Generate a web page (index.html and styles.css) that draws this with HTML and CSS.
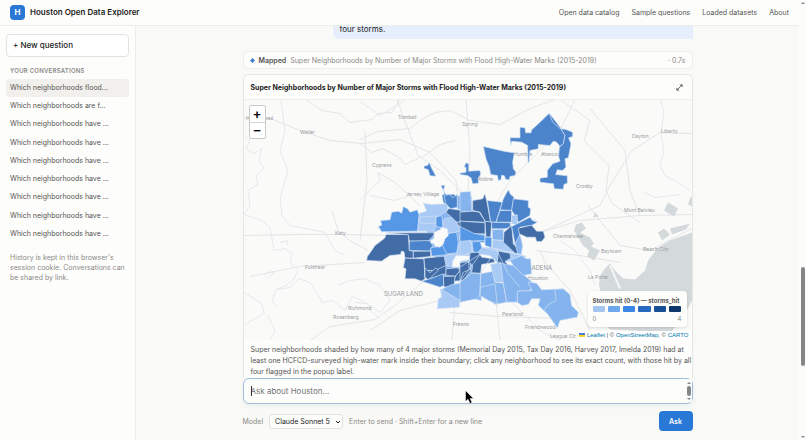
FILE: index.html
```html
<!DOCTYPE html>
<html lang="en">
<head>
<meta charset="utf-8">
<title>Houston Open Data Explorer</title>
<link rel="stylesheet" href="styles.css">
</head>
<body>
<div class="app">
  <header class="topbar">
    <span class="logo">H</span>
    <span class="brand">Houston Open Data Explorer</span>
    <nav class="nav">
      <a href="#">Open data catalog</a>
      <a href="#">Sample questions</a>
      <a href="#">Loaded datasets</a>
      <a href="#">About</a>
    </nav>
  </header>
  <div class="body">
    <aside class="sidebar">
      <button class="new">+ New question</button>
      <h2 class="side-title">Your conversations</h2>
      <nav class="history">
        <a class="active" href="#">Which neighborhoods flood...</a>
        <a href="#">Which neighborhoods are f...</a>
        <a href="#">Which neighborhoods have ...</a>
        <a href="#">Which neighborhoods have ...</a>
        <a href="#">Which neighborhoods have ...</a>
        <a href="#">Which neighborhoods have ...</a>
        <a href="#">Which neighborhoods have ...</a>
        <a href="#">Which neighborhoods have ...</a>
        <a href="#">Which neighborhoods have ...</a>
      </nav>
      <p class="note">History is kept in this browser's session cookie. Conversations can be shared by link.</p>
    </aside>
    <main class="main">
      <div class="thread">
        <div class="bubble">four storms.</div>
        <div class="step">
          <svg class="diamond" viewBox="0 0 6 6"><path d="M3 0 6 3 3 6 0 3z"/></svg>
          <b>Mapped</b>
          <span>Super Neighborhoods by Number of Major Storms with Flood High-Water Marks (2015-2019)</span>
          <span class="time">· 0.7s</span>
        </div>
        <section class="card">
          <div class="card-head">
            <h1>Super Neighborhoods by Number of Major Storms with Flood High-Water Marks (2015-2019)</h1>
            <button class="expand" aria-label="Expand"><svg viewBox="0 0 8 8"><path d="M1 7 7 1M4.500 1H7V3.500M1 4.500V7H3.500"/></svg></button>
          </div>
          <div class="map">
            <svg class="canvas" viewBox="244 99 448 241" preserveAspectRatio="xMidYMid slice">
              <g class="roads">
                <path d="M244 118 270 118 300 130 330 140 362 143 400 139 430 152 456 180 460 215 463 260M306 99 322 110 340 113 350 122 372 119 378 113 392 112 400 99M360 139 378 131 410 128 420 120 435 112 450 110 470 120 500 124 530 108 555 99M397 99 403 115 418 155 440 170 470 200M466 99 470 150 468 190M575 99 560 130 540 150 510 180 480 230M244 235 300 234 340 234 460 236 540 232 580 220 640 215 692 214M310 340 330 326 375 319 395 305 430 275 462 258M365 262 300 266 250 276M470 260 500 290 540 330 560 340M462 260 440 300 400 310 370 330M463 262 455 300 452 340M540 232 600 205 610 185 632 150 660 132 692 133M590 108 625 150 630 190 640 215M588 205 600 220 620 245 650 250 692 228M535 250 580 255 620 262M560 99 590 120 584 140 596 152 609 165 606 190 612 203 640 222M360 143 372 152 382 148 398 156 405 164 425 155 440 144 455 140M360 200 380 180 378 172 395 182 420 205M332 210 338 230 350 240 368 250M365 130 367 180 360 240M540 250 545 262 570 290 590 330M450 312 500 316 560 318M490 260 495 290 500 340"/>
              </g>
              <g class="streams">
                <path d="M244 135 250 140 246 148 254 153 262 148 259 160 264 168 256 176 258 184 248 190 250 205 244 214 262 220 270 227 272 238 274 250 285 248 292 253 290 262 298 270 293 280 284 286 276 289 272 300 276 306M281 99 285 130 280 150 288 170 280 198 282 215 290 225 325 232 335 250 345 255M244 292 262 303 264 313 250 321 244 325M268 315 275 330 270 340M276 289 290 287 299 278 310 282 318 294 322 302 333 300 345 310 352 296 362 300 380 312 390 300 380 285 365 278 350 280 338 285M265 275 270 270 275 272 268 277M280 242 287 240 288 245M355 302 368 303 370 310 380 318M660 99 664 110 661 135 664 150 660 165 665 175 678 182 690 190M644 192 655 197 680 194M360 101 380 115 400 103 405 99M410 195 395 200 370 195M560 240 575 250 590 270 595 285"/>
              </g>
              <g class="water">
                <path d="M692 232 670 240 657 248 648 260 645 270 635 279 623 278 615 270 610 263 605 268 600 275 599 285 603 300 600 320 610 329 650 331 672 331 688 308 692 300z"/>
                <path d="M576 224 582 222 586 228 580 232 590 237 594 243 591 246 600 250 594 260 587 256 589 250 582 244 578 236 574 230z M668 202 678 208 674 216 664 210z M658 232 664 228 670 234 662 240z M670 228 690 223 686 229 672 234z M690 198 692 196 692 206 688 204z M595 212 599 216 593 217z"/>
              </g>
              <path class="channel" d="M610 265 620 288"/>
              <g class="labels">
                <text x="246" y="119">Hempstead</text>
                <text x="398" y="118">Tomball</text><text x="462" y="125">Spring</text><text x="300" y="133">Waller</text>
                <text x="372" y="166">Cypress</text><text x="406" y="195">Jersey Village</text><text x="335" y="234">Katy</text>
                <text x="305" y="268">Fulshear</text><text x="348" y="309">Richmond</text><text x="333" y="318">Rosenberg</text>
                <text x="502" y="315">Pearland</text><text x="453" y="325">Fresno</text><text x="525" y="328">Friendswood</text>
                <text x="550" y="337">League City</text><text x="528" y="279">Houston</text><text x="553" y="237">Channelview</text>
                <text x="601" y="252">Baytown</text><text x="643" y="250">Beach City</text><text x="588" y="278">La Porte</text>
                <text x="624" y="211">Mont Belvieu</text><text x="632" y="137">Dayton</text><text x="661" y="132">Liberty</text>
                <text x="576" y="187">Crosby</text><text x="514" y="155">Humble</text><text x="541" y="155">Atascocita</text><text x="478" y="180">Aldine</text>
                <text class="city" x="384" y="295">SUGAR LAND</text><text class="city" x="520" y="269">PASADENA</text>
              </g>
              <!-- north-east neighborhoods -->
              <g class="hoods" transform="translate(460 100) scale(.3333)">
                <path class="s3" d="M268 38 276 55 300 80 315 105 310 130 300 138 290 125 280 122 270 135 235 132 235 145 210 150 207 185 204 185 203 135 185 125 155 122 152 135 150 112 180 112 180 80 195 82 197 97 213 97 215 88 235 70z"/>
                <path class="s3" d="M268 38 278 65 300 84 318 87 338 95 338 108 326 112 333 130 325 172 315 175 318 200 308 210 292 208 287 222 322 226 322 248 312 252 310 266 283 265 280 250 240 245 240 233 262 230 262 210 278 190 300 182 296 168 298 140 310 130 315 105 300 80z"/>
                <path class="s3" d="M70 138 135 153 163 157 158 185 160 205 168 215 165 225 150 228 148 238 137 237 133 226 125 224 123 238 115 240 112 225 92 222 88 200 78 175z"/>
                <path class="s3" d="M18 187 26 190 26 212 60 210 62 222 55 232 55 248 38 250 33 232 22 225 0 222 0 218 18 215 18 200 12 200z"/>
              </g>
              <g class="hoods" transform="translate(360 100) scale(.3333)">
                <path class="s3" d="M192 197 202 195 208 187 215 203 228 227 210 226 205 208 192 203z"/>
                <path class="s3" d="M243 255 255 254 250 270 259 283 282 281 290 288 288 316 266 320 250 305 246 284 254 280z"/>
              </g>
              <!-- western neighborhoods -->
              <g class="hoods" transform="translate(360 190) scale(.3333)">
                <path class="s1" d="M190 78 250 60 360 70 360 280 240 260 200 120z"/>
                <path class="s2" d="M55 108 65 104 62 90 90 88 95 65 115 62 125 68 130 48 143 55 150 65 172 58 178 75 173 122 65 124z"/>
                <path class="s0" d="M178 68 200 62 190 38 215 42 262 40 264 62 242 72 235 80 228 105 222 122 173 122z"/>
                <path class="s0" d="M180 80 228 76 228 98 180 98z"/>
                <path class="s2" d="M228 80 245 75 250 112 228 108z"/>
                <path class="s4" d="M78 132 145 132 148 180 160 182 160 203 135 203 132 184 124 182 122 192 90 195 75 205 65 212 20 210 22 198 35 180 45 165 65 150 75 142z"/>
                <path class="s4" d="M78 127 222 127 225 130 205 152 148 152 145 133z"/>
                <path class="s3" d="M148 152 208 150 218 165 210 182 148 180z"/>
                <path class="s4" d="M160 182 212 182 212 198 160 203z"/>
                <path class="s2" d="M212 172 250 165 275 180 268 192 215 197z"/>
                <path class="s2" d="M250 130 290 125 295 160 290 187 260 190 248 165z"/>
                <path class="s0" d="M248 100 255 83 280 80 295 105 297 122 262 130 262 115 250 112z"/>
                <path class="s4" d="M258 66 266 54 335 64 340 95 290 95 275 80z"/>
                <path class="s4" d="M290 95 375 95 375 130 320 122 295 105z"/>
                <path class="s2" d="M297 122 375 132 375 155 300 160z"/>
                <path class="s0" d="M295 160 335 152 340 190 290 195z"/>
                <path class="s3" d="M252 15 270 12 278 22 292 12 293 50 272 55 258 40z"/>
                <path class="s1" d="M292 17 325 8 335 20 337 65 292 55z"/>
                <path class="s4" d="M135 203 192 205 195 265 185 272 165 265 135 265 138 235 130 232z"/>
                <path class="s4" d="M192 203 252 197 258 225 235 240 195 240z"/>
                <path class="s4" d="M195 240 225 240 258 225 258 250 210 265 195 262z"/>
                <path class="s4" d="M195 232 210 247 228 232 235 240 205 268 195 260z"/>
                <path class="s3" d="M185 272 210 265 250 250 252 285 240 290 225 285z"/>
                <path class="s4" d="M258 235 292 232 300 240 288 257 258 255z"/>
                <path class="s4" d="M250 258 286 257 282 287 252 290z"/>
                <path class="s4" d="M302 215 330 212 332 240 310 270 282 272 288 255 302 238z"/>
                <path class="s0" d="M255 195 290 190 280 225 262 228z"/>
                <path class="hole" d="M222 125 240 118 245 110 262 115 265 135 255 145 250 160 240 170 225 168 222 160 214 158 212 150 222 143zM288 195 332 196 328 208 302 212 300 230 276 230 278 212z"/>
                <path class="s1" d="M242 298 275 282 320 275 360 248 364 330 330 322 300 330 245 320z"/>
                <path class="s0" d="M242 295 300 330 298 350 232 355 235 325 245 320z"/>
              </g>
              <!-- central and eastern neighborhoods -->
              <g class="hoods" transform="translate(460 190) scale(.3333)">
                <path class="s1" d="M0 5 32 3 35 65 0 62z"/>
                <path class="s4" d="M38 30 68 25 74 10 80 30 92 95 75 92 60 65 38 60z"/>
                <path class="s3" d="M82 30 127 35 108 95 92 95z"/>
                <path class="s3" d="M130 25 137 12 145 -2 152 12 162 20 155 60 120 58z"/>
                <path class="s3" d="M160 25 205 30 205 50 212 55 210 75 175 95 165 75 155 60z"/>
                <path class="s3" d="M120 60 155 60 155 95 108 95z"/>
                <path class="s0" d="M155 75 172 73 172 102 155 100z"/>
                <path class="s4" d="M0 65 38 62 58 65 75 92 75 95 0 92z"/>
                <path class="s4" d="M0 92 75 97 75 130 40 130 0 110z"/>
                <path class="s4" d="M75 92 95 95 92 140 78 140z"/>
                <path class="s3" d="M95 95 152 97 150 110 135 115 95 115z"/>
                <path class="s2" d="M0 108 40 128 75 135 75 150 0 152z"/>
                <path class="s2" d="M75 140 95 140 95 172 75 165z"/>
                <path class="s1" d="M97 117 130 117 130 150 97 148z"/>
                <path class="s0" d="M97 148 130 150 165 170 168 188 130 180 97 172z"/>
                <path class="s4" d="M132 125 155 105 160 160 175 175 173 190 165 188 130 155z"/>
                <path class="s3" d="M155 108 210 80 218 90 232 95 215 105 180 110 178 145 165 160z"/>
                <path class="s1" d="M165 160 180 132 188 165 184 192 174 190z"/>
                <path class="s4" d="M175 113 215 104 230 122 250 122 255 140 245 153 230 153 226 140 200 140 178 130z"/>
                <path class="s0" d="M0 155 32 150 36 187 0 195zM60 170 95 172 165 190 200 197 150 212 110 215 90 195 50 190z"/>
                <path class="s2" d="M36 155 60 152 66 172 52 187 40 183z"/>
                <path class="s4" d="M30 187 55 185 65 200 100 205 105 215 65 222 62 248 35 247 38 225 28 215z"/>
                <path class="s4" d="M0 217 25 213 28 238 10 245 0 272z"/>
                <path class="s4" d="M115 182 150 188 152 203 135 213 147 225 112 222z"/>
                <path class="s1" d="M0 275 35 248 62 250 60 315 50 325 0 335z"/>
                <path class="s1" d="M62 250 100 242 105 275 130 278 140 335 105 342 90 330 60 315z"/>
                <path class="s1" d="M62 290 105 280 112 340 90 332 60 315z"/>
                <path class="s0" d="M92 222 122 215 132 275 105 275z"/>
                <path class="s1" d="M122 218 160 225 228 285 205 302 175 302 172 335 140 335 130 280z"/>
                <path class="s1" d="M150 210 185 195 200 205 212 205 215 250 190 255 160 225z"/>
                <path class="s1" d="M172 302 215 300 205 275 230 278 245 298 310 295 330 312 335 345 355 365 352 380 300 390 292 413 280 395 262 370 235 345 240 325 215 325 205 342 185 345 172 335z"/>
                <path class="line" d="M285 298 288 330 265 342 252 360M0 272 62 190 M62 190 0 230M65 170 115 182M108 175 145 250 180 290M62 250 90 205M215 90 225 85 234 96"/>
              </g>
            </svg>
            <div class="zoom"><button aria-label="Zoom in">+</button><button aria-label="Zoom out">−</button></div>
            <div class="legend">
              <b>Storms hit (0-4) — storms_hit</b>
              <div class="swatches"><i class="c1"></i><i class="c2"></i><i class="c3"></i><i class="c4"></i><i class="c5"></i><i class="c6"></i></div>
              <div class="range"><span>0</span><span>4</span></div>
            </div>
            <div class="credit"><svg class="flag" viewBox="0 0 12 8"><path fill="#4c7be1" d="M0 0h12v4H0z"/><path fill="#ffd500" d="M0 4h12v3H0z"/><path fill="#e0bc00" d="M0 7h12v1H0z"/></svg> <a href="#">Leaflet</a> | © <a href="#">OpenStreetMap</a>, © <a href="#">CARTO</a></div>
          </div>
          <p class="caption">Super neighborhoods shaded by how many of 4 major storms (Memorial Day 2015, Tax Day 2016, Harvey 2017, Imelda 2019) had at least one HCFCD-surveyed high-water mark inside their boundary; click any neighborhood to see its exact count, with those hit by all four flagged in the popup label.</p>
        </section>
      </div>
      <form class="composer">
        <div class="field">
          <textarea aria-label="Ask about Houston" placeholder="Ask about Houston..."></textarea>
          <span class="caret"></span>
          <svg class="mini-bar" viewBox="0 0 6 23"><path class="track" d="M0 0h6v23H0z"/><path d="M3 3 5 5H1zM3 21 1 19h4z"/><rect x="1" y="7" width="4" height="10" rx="2"/></svg>
          <svg class="pointer" viewBox="0 0 9 14"><path d="M.5.500V11.500L3 9.200 5 13.500 7 12.600 5.200 8.500H8.500z"/></svg>
        </div>
        <div class="controls">
          <label for="model">Model</label>
          <div class="pick">
            <select id="model"><option>Claude Sonnet 5</option></select>
            <svg viewBox="0 0 6 4"><path d="M1 1 3 3 5 1"/></svg>
          </div>
          <span>Enter to send · Shift+Enter for a new line</span>
          <button class="ask" type="button">Ask</button>
        </div>
      </form>
    </main>
  </div>
</div>
<div class="scrollbar"><i class="up"></i><i class="thumb"></i><i class="down"></i></div>
</body>
</html>
```
FILE: styles.css
```css
* { box-sizing: border-box; }
body {
  margin: 0;
  height: 100vh;
  display: flex;
  overflow: hidden;
  background: #f9f9f7;
  color: #1c1c1b;
  font: 8px/11px Inter, "Liberation Sans", sans-serif;
}
button, select, textarea { font: inherit; color: inherit; margin: 0; }
a { color: inherit; text-decoration: none; }
h1, h2, p { margin: 0; }

.app { flex: 1; min-width: 0; display: flex; flex-direction: column; }
.topbar {
  height: 26px;
  flex: none;
  display: flex;
  align-items: center;
  gap: 5px;
  padding: 0 10px;
  background: #fdfdfc;
  border-bottom: 1px solid #ececea;
}
.logo {
  width: 15px;
  height: 15px;
  border-radius: 4px;
  background: #2a78d6;
  color: #fff;
  font-weight: 700;
  line-height: 15px;
  text-align: center;
}
.brand { font-weight: 600; }
.nav { margin-left: auto; display: flex; gap: 12px; color: #555452; font-size: 7px; }

.body { flex: 1; min-height: 0; display: flex; }
.sidebar {
  width: 136px;
  flex: none;
  padding: 8px 6px;
  background: #fdfdfc;
  border-right: 1px solid #ececea;
}
.new {
  width: 100%;
  height: 23px;
  padding: 0 6px;
  border: 1px solid #e2e2df;
  border-radius: 4px;
  background: #fff;
  font-weight: 500;
  text-align: left;
}
.side-title {
  margin: 8px 4px 3px;
  color: #8b8a86;
  font-size: 6px;
  line-height: 11px;
  font-weight: 600;
  letter-spacing: 0.04em;
  text-transform: uppercase;
}
.history { display: grid; grid-auto-rows: 1fr; height: 164px; color: #555452; font-size: 7px; }
.history a { padding: 0 4px; line-height: 18px; border-radius: 3px; white-space: nowrap; overflow: hidden; }
.history .active { background: #f1f0ed; }
.note { margin: 10px 4px; color: #8b8a86; font-size: 7px; line-height: 10px; }

.main { flex: 1; min-width: 0; display: flex; flex-direction: column; }
.thread {
  flex: 1;
  min-height: 0;
  overflow: hidden;
  width: 100%;
  max-width: 450px;
  margin: 0 auto;
  display: flex;
  flex-direction: column;
}
.bubble {
  align-self: flex-end;
  flex: none;
  width: 80%;
  height: 13px;
  padding: 0 7px;
  line-height: 6px;
  background: #e6eefc;
  border-radius: 0 0 2px 6px;
}
.step {
  display: flex;
  align-items: center;
  gap: 4px;
  height: 18px;
  flex: none;
  margin: 12px 0 5px;
  padding: 0 6px;
  border: 1px solid #eeeeeb;
  border-radius: 4px;
  background: #fdfdfc;
  color: #8b8a86;
  font-size: 7px;
}
.step b { color: #555452; font-weight: 600; }
.diamond { width: 5px; height: 5px; fill: #3f7fd0; }
.time { margin-left: auto; }
.card {
  flex: none;
  border: 1px solid #e6e6e3;
  border-radius: 5px;
  background: #fdfdfc;
}
.card-head { display: flex; align-items: center; justify-content: space-between; height: 24px; padding: 0 7px; }
.card-head h1 { font-size: 7px; font-weight: 700; }
.expand { border: 0; padding: 0 2px; background: none; display: flex; }
.expand svg { width: 7px; height: 7px; fill: none; stroke: #555452; }

.map { position: relative; height: 241px; overflow: hidden; background: #fafaf9; border-top: 1px solid #eeeeeb; }
.canvas { display: block; width: 100%; height: 100%; }
.roads { fill: none; stroke: #e4e5e6; }
.streams { fill: none; stroke: #e6e9eb; }
.water { fill: #d4d9dc; }
.channel { stroke: #f5f6f6; stroke-width: 2; }
.labels { fill: #989ba0; font-size: 5px; }
.labels .city { font-size: 6px; }
.hoods { stroke: #d3e2f5; stroke-width: 2; stroke-linejoin: round; }
.s0 { fill: #a9caf4; }
.s1 { fill: #84b3ee; }
.s2 { fill: #5698e6; }
.s3 { fill: #4b84cb; }
.s4 { fill: #416ca6; }
.hole { fill: #fafaf9; }
.line { fill: none; }

.zoom {
  position: absolute;
  left: 5px;
  top: 5px;
  width: 17px;
  border: 1px solid #c9c9c7;
  border-radius: 2px;
  background: #fff;
}
.zoom button {
  display: block;
  width: 100%;
  height: 16px;
  padding: 0;
  border: 0;
  background: none;
  color: #000;
  font: bold 13px/15px "Liberation Sans", sans-serif;
}
.zoom button + button { border-top: 1px solid #d5d5d3; }
.legend {
  position: absolute;
  right: 5px;
  bottom: 13px;
  width: 99px;
  padding: 5px 5px 4px;
  border-radius: 4px;
  background: #fdfdfc;
  box-shadow: 0 1px 3px #0002;
  color: #8b8a86;
  font-size: 6px;
  line-height: 9px;
}
.legend b { display: block; color: #555452; font-weight: 700; white-space: nowrap; }
.swatches { display: grid; grid-template-columns: repeat(6, 1fr); gap: 3px; margin: 1px 0 2px; }
.swatches i { height: 6px; border-radius: 1px; }
.c1 { background: #a5c6f0; }
.c2 { background: #6da7ec; }
.c3 { background: #3987e5; }
.c4 { background: #256abf; }
.c5 { background: #184f95; }
.c6 { background: #0d366b; }
.range { display: flex; justify-content: space-between; }
.credit {
  position: absolute;
  right: 0;
  bottom: 0;
  padding: 0 3px;
  background: #fffc;
  color: #555452;
  font: 6px/9px "Liberation Sans", sans-serif;
}
.credit a { color: #0078a8; }
.flag { width: 6px; height: 4px; }
.caption { padding: 4px 0 4px 7px; color: #555452; font-size: 7px; line-height: 11px; }

.composer { position: relative; width: 100%; max-width: 450px; margin: 0 auto; padding-bottom: 9px; background: #f9f9f7; }
.field { position: relative; height: 26px; }
textarea {
  display: block;
  width: 100%;
  height: 26px;
  padding: 7px;
  border: 1px solid #9dbfdd;
  border-radius: 6px;
  outline: 0;
  resize: none;
  overflow: hidden;
  background: #fdfdfc;
  box-shadow: 0 2px 5px #0000000d;
}
textarea::placeholder { color: #757575; }
.caret { position: absolute; left: 8px; top: 8px; width: 1px; height: 10px; background: #333; }
.mini-bar { position: absolute; right: 1px; top: 1px; width: 6px; height: 23px; fill: #85858a; }
.mini-bar .track { fill: #fbfbfa; }
.pointer { position: absolute; left: 49.5%; top: 12px; width: 9px; height: 14px; fill: #000; stroke: #fff; stroke-width: 0.5; }
.controls { display: flex; align-items: center; gap: 6px; margin-top: 7px; color: #8b8a86; font-size: 7px; }
.pick { position: relative; }
.pick select {
  display: block;
  appearance: none;
  width: 74px;
  height: 15px;
  padding: 0 5px;
  border: 1px solid #e2e2df;
  border-radius: 3px;
  background: #fdfdfc;
  color: #1c1c1b;
}
.pick svg { position: absolute; right: 2px; top: 6px; width: 6px; height: 4px; fill: none; stroke: #1c1c1b; pointer-events: none; }
.ask {
  margin-left: auto;
  width: 34px;
  height: 20px;
  padding: 0;
  border: 0;
  border-radius: 4px;
  background: #2a78d6;
  color: #fff;
  font-weight: 600;
}

.scrollbar { position: relative; width: 7px; flex: none; background: #fcfcfb; }
.scrollbar i { position: absolute; left: 2px; width: 4px; }
.thumb { top: 60.7%; height: 22.5%; border-radius: 2px; background: #858585; }
.up { top: 2px; border: 2px solid transparent; border-top: 0; border-bottom: 2px solid #858585; }
.down { bottom: 2px; border: 2px solid transparent; border-bottom: 0; border-top: 2px solid #858585; }
```
